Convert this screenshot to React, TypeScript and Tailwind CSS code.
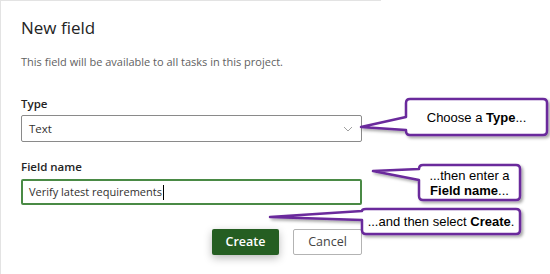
import React from "react";

const uiFont = { fontFamily: '"Open Sans", "Noto Sans", sans-serif' };
const calloutFont = { fontFamily: '"Liberation Sans", Arial, sans-serif' };

type CalloutProps = {
  path: string;
  left: number;
  top: number;
  width: number;
  height: number;
  children: React.ReactNode;
};

function Callout({ path, left, top, width, height, children }: CalloutProps) {
  return (
    <>
      <svg className="pointer-events-none absolute inset-0" width={550} height={274}>
        <defs>
          <filter id="calloutShadow" x="-10%" y="-20%" width="130%" height="160%">
            <feDropShadow dx="2" dy="2" stdDeviation="1.5" floodColor="#000" floodOpacity="0.35" />
          </filter>
        </defs>
        <path d={path} fill="#fff" stroke="#6a2a9c" strokeWidth={2.5} strokeLinejoin="round" filter="url(#calloutShadow)" />
      </svg>
      <div
        className="absolute flex flex-col items-center justify-center text-[13px] leading-[15px] text-black"
        style={{ ...calloutFont, left, top, width, height }}
      >
        {children}
      </div>
    </>
  );
}

export default function App() {
  return (
    <div className="relative h-[274px] w-[550px] overflow-hidden bg-white" style={uiFont}>
      <div className="h-[274px] w-[381px] border-l border-t border-[#e3e3e3] pl-[20px] pr-[19px]">
        <h1 className="mt-[14px] text-[17px] leading-[26px] text-[#242424]">New field</h1>
        <p className="mt-[13px] text-[11px] leading-[16px] text-[#616161]">
          This field will be available to all tasks in this project.
        </p>

        <label className="mt-[26px] block text-[11.5px] font-semibold leading-[16px] text-[#242424]">Type</label>
        <div className="mt-[3px] flex h-[27px] items-center justify-between rounded-[2px] border border-[#8a8a8a] pl-[7px] pr-[8px]">
          <span className="text-[11.5px] text-[#323130]">Text</span>
          <svg width="10" height="6" viewBox="0 0 10 6">
            <path d="M1 1 L5 5 L9 1" fill="none" stroke="#a0a0a0" strokeWidth="1" />
          </svg>
        </div>

        <label className="mt-[17px] block text-[11.5px] font-semibold leading-[16px] text-[#242424]">Field name</label>
        <div className="mt-[4px] flex h-[26px] items-center rounded-[2px] border-2 border-[#4a8a45] pl-[6px]">
          <span className="text-[11px] text-[#323130]">Verify latest requirements</span>
          <span className="ml-[1px] h-[15px] w-px bg-black" />
        </div>

        <div className="mt-[24px] flex justify-end gap-[14px]">
          <button className="h-[26px] w-[67px] rounded-[2px] bg-[#255e22] text-[12.5px] font-semibold text-white shadow-[0_3px_8px_rgba(0,0,0,0.28)]">
            Create
          </button>
          <button className="h-[26px] w-[69px] rounded-[2px] border border-[#b3b3b3] bg-white text-[12.5px] text-[#444]">
            Cancel
          </button>
        </div>
      </div>

      <Callout
        path="M410 99 H543 Q547 99 547 103 V131 Q547 135 543 135 H410 Q406 135 406 131 V130 L361 127 L406 117 V103 Q406 99 410 99 Z"
        left={406}
        top={99}
        width={141}
        height={36}
      >
        <span>
          Choose a <b>Type</b>...
        </span>
      </Callout>

      <Callout
        path="M423 165 H516 Q520 165 520 169 V196 Q520 200 516 200 H423 Q419 200 419 196 V180 L373 171 L419 169 V169 Q419 165 423 165 Z"
        left={419}
        top={165}
        width={101}
        height={35}
      >
        <span>...then enter a</span>
        <span>
          <b>Field name</b>...
        </span>
      </Callout>

      <Callout
        path="M366 209 H516 Q520 209 520 213 V230 Q520 234 516 234 H366 Q362 234 362 230 V220 L270 217 L362 211 Q362 209 366 209 Z"
        left={362}
        top={209}
        width={158}
        height={25}
      >
        <span>
          ...and then select <b>Create</b>.
        </span>
      </Callout>
    </div>
  );
}
